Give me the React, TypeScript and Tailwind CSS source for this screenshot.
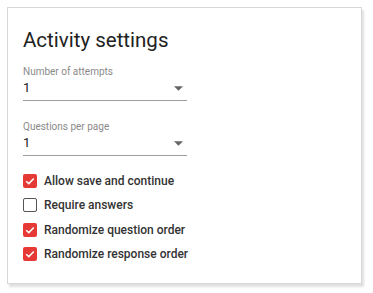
import React from "react";

function Select({ label }: { label: string }) {
  return (
    <div className="w-[164px]">
      <div className="text-[10px] leading-[12px] text-[#8a8a8a]">{label}</div>
      <div className="flex items-start justify-between h-[23px] border-b border-[#9e9e9e] pr-[3px]">
        <span className="text-[13px] leading-[20px] text-[#222]">1</span>
        <svg width="9" height="5" viewBox="0 0 10 5" className="mr-[1px] mt-[8px]">
          <path d="M0 0 L10 0 L5 5 Z" fill="#666" />
        </svg>
      </div>
    </div>
  );
}

function Check({ checked, label }: { checked: boolean; label: string }) {
  return (
    <div className="flex items-center gap-[7px] h-[24.3px]">
      {checked ? (
        <div className="w-[14px] h-[14px] rounded-[2px] bg-[#e53935] flex items-center justify-center">
          <svg width="10" height="8" viewBox="0 0 10 8">
            <path d="M1.2 4.2 L3.8 6.6 L8.8 1.4" stroke="#fff" strokeWidth="1.5" fill="none" />
          </svg>
        </div>
      ) : (
        <div className="w-[14px] h-[14px] rounded-[2px] border-[1.5px] border-[#555] bg-white" />
      )}
      <span className="text-[12px] font-medium text-[#333]">{label}</span>
    </div>
  );
}

export default function App() {
  return (
    <div className="w-[373px] h-[293px] bg-white p-[7px] pb-[9px] pr-[11px]" style={{ fontFamily: "Roboto, 'Noto Sans', sans-serif" }}>
      <div className="h-[277px] bg-white border border-[#d8d8d8] shadow-[2px_3px_2px_rgba(0,0,0,0.12)] pl-[15px] pt-[20px]">
        <h1 className="text-[20.5px] leading-[24px] text-[#222] font-normal">Activity settings</h1>
        <div className="mt-[14px]">
          <Select label="Number of attempts" />
        </div>
        <div className="mt-[20px]">
          <Select label="Questions per page" />
        </div>
        <div className="mt-[13px] flex flex-col">
          <Check checked label="Allow save and continue" />
          <Check checked={false} label="Require answers" />
          <Check checked label="Randomize question order" />
          <Check checked label="Randomize response order" />
        </div>
      </div>
    </div>
  );
}
